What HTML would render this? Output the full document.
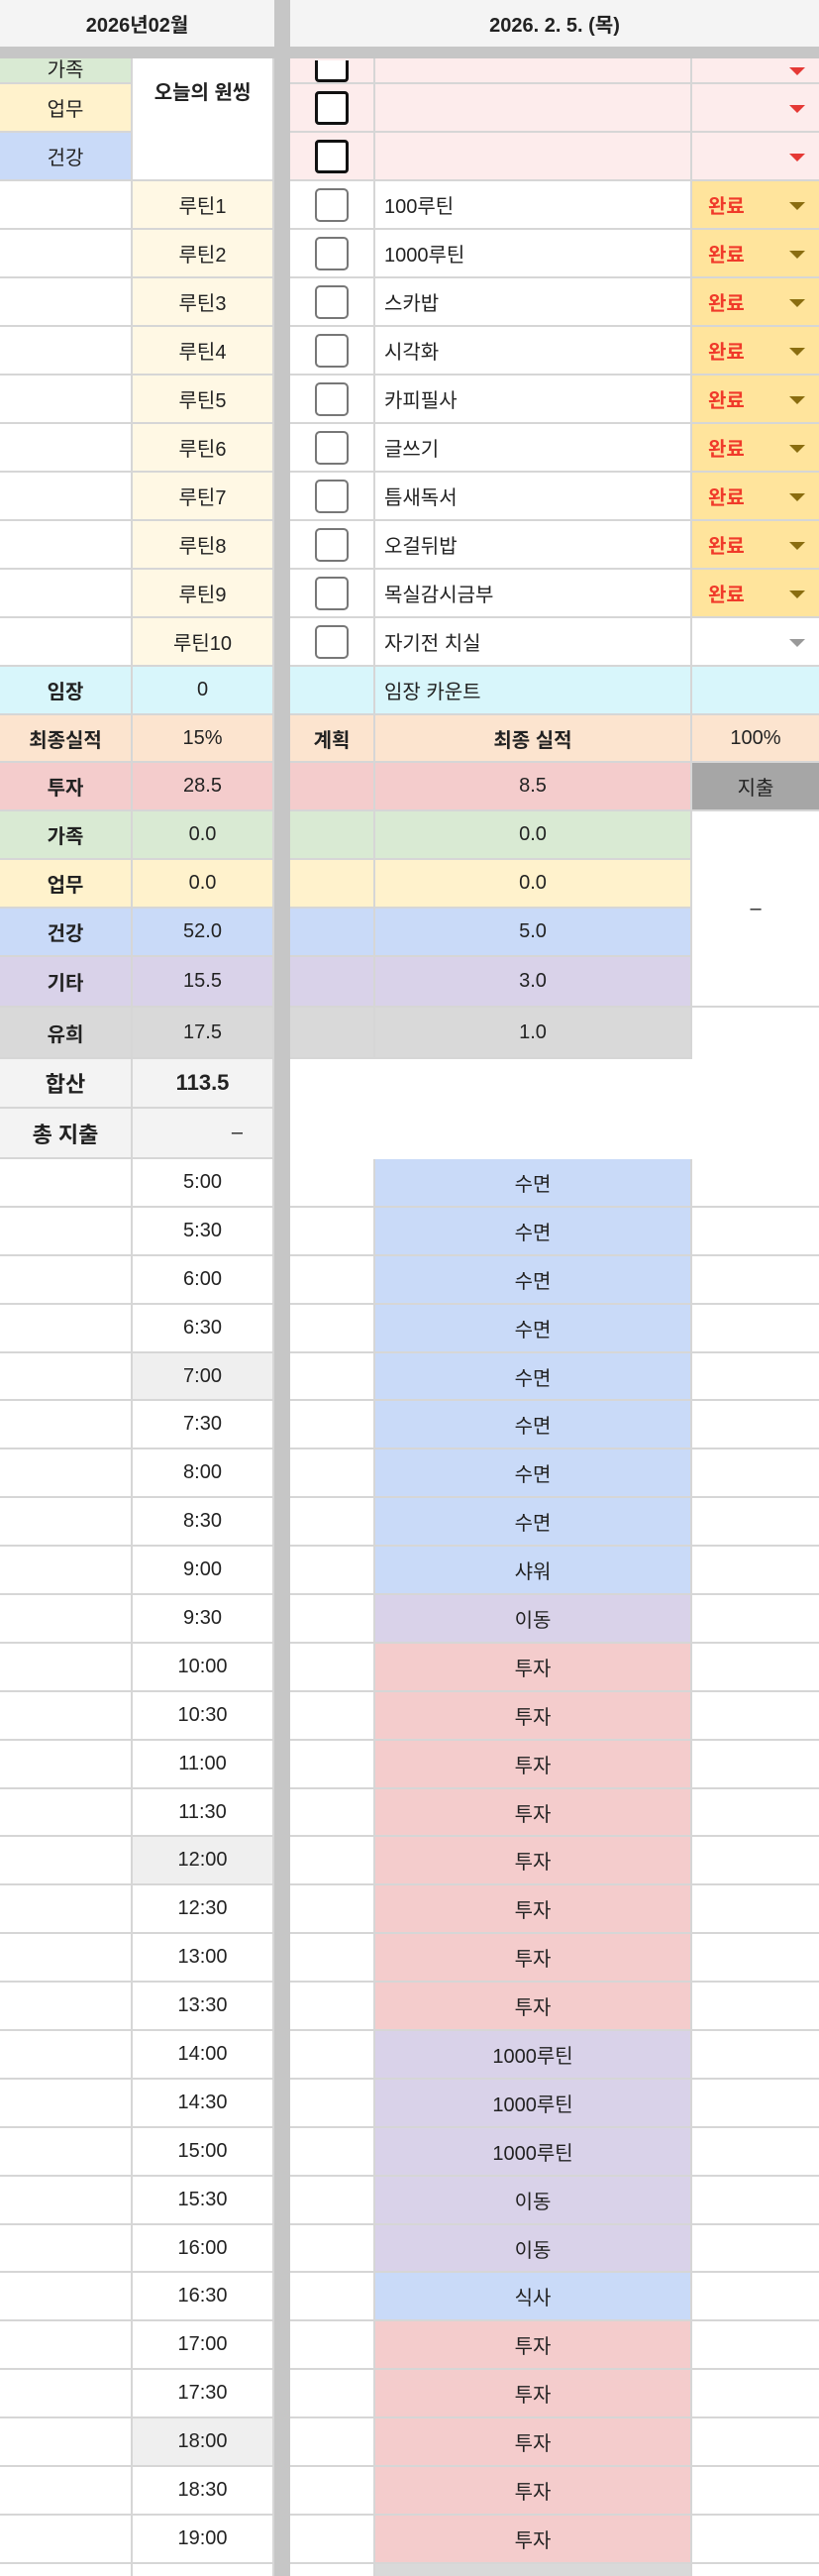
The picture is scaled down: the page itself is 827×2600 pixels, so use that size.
<!DOCTYPE html>
<html><head><meta charset="utf-8">
<style>
*{box-sizing:border-box;margin:0;padding:0}
html,body{width:827px;height:2600px;overflow:hidden;background:#fff}
body{font-family:"Liberation Sans","Noto Sans CJK KR",sans-serif;font-size:20px;color:#222}
#w{position:absolute;left:0;top:0;width:827px;height:2600px;overflow:hidden}
.r{display:flex;height:49px;position:relative}
.t{height:48.9px}
.r>div{border-right:2px solid #d6d6d6;border-bottom:2px solid #d6d6d6;display:flex;align-items:center;justify-content:center;overflow:hidden;white-space:nowrap}
.a{width:134px}.b{width:143px}.v{width:16px;background:#c6c6c6;border:none!important}
.c{width:86px}.d{width:320px}.e{width:128px;border-right:none!important}
.d.l{justify-content:flex-start;padding-left:9px}
.bo{font-weight:bold}
.cb{width:34px;height:34px;border:3px solid #111;border-radius:4px;background:#fff}
.cg{width:34px;height:34px;border:2px solid #777;border-radius:5px;background:#fff}
.e.dd{justify-content:flex-start;position:relative}
.tri{position:absolute;right:14px;top:50%;margin-top:-3px;width:0;height:0;border-left:8px solid transparent;border-right:8px solid transparent;border-top:8px solid #e53935}
.tri.o{border-top-color:#8a6d10}.tri.g{border-top-color:#999}
.done{color:#f03a2a;font-weight:bold;padding-left:16px}
.pk{background:#fdecec}.cr{background:#fff8e4}.or{background:#ffe49c}
.cy{background:#d8f6fb}.pe{background:#fce4cf}.iv{background:#f4cccc}.gr{background:#d9ead3}
.ye{background:#fff2cc}.bl{background:#c9daf8}.pu{background:#d9d2e9}.gy{background:#d9d9d9}
.lg{background:#f3f3f3}.sg{background:#efefef}.dk{background:#a6a6a6}
.nb{border:none!important}
</style></head><body><div id="w">
<div class="r" style="height:47px;background:#f4f4f4">
<div style="width:277px;font-weight:bold;border-bottom:none;border-right:none">2026년02월</div>
<div class="v"></div>
<div style="width:534px;font-weight:bold;border:none">2026. 2. 5. (목)</div>
</div>
<div style="height:12px;background:#c6c6c6"></div>
<div style="position:relative">
<div class="r" style="height:26px"><div class="a gr" style="align-items:flex-end">가족</div><div class="b" style="border-bottom:none"></div><div class="v"></div><div class="c pk" style="align-items:flex-end"><div class="cb" style="height:22px;border-top:none;border-radius:0 0 4px 4px"></div></div><div class="d pk"></div><div class="e pk dd"><span class="tri"></span></div></div>
<div class="r"><div class="a ye">업무</div><div class="b" style="border-bottom:none"></div><div class="v"></div><div class="c pk"><div class="cb"></div></div><div class="d pk"></div><div class="e pk dd"><span class="tri"></span></div></div>
<div class="r"><div class="a bl">건강</div><div class="b"></div><div class="v"></div><div class="c pk"><div class="cb"></div></div><div class="d pk"></div><div class="e pk dd"><span class="tri"></span></div></div>
<div style="position:absolute;left:134px;top:0;width:141px;height:100px;display:flex;justify-content:center;padding-top:18px;font-weight:bold;background:#fff">오늘의 원씽</div>
</div>
<div class="r"><div class="a"></div><div class="b cr">루틴1</div><div class="v"></div><div class="c"><div class="cg"></div></div><div class="d l">100루틴</div><div class="e or dd"><span class="done">완료</span><span class="tri o"></span></div></div>
<div class="r"><div class="a"></div><div class="b cr">루틴2</div><div class="v"></div><div class="c"><div class="cg"></div></div><div class="d l">1000루틴</div><div class="e or dd"><span class="done">완료</span><span class="tri o"></span></div></div>
<div class="r"><div class="a"></div><div class="b cr">루틴3</div><div class="v"></div><div class="c"><div class="cg"></div></div><div class="d l">스카밥</div><div class="e or dd"><span class="done">완료</span><span class="tri o"></span></div></div>
<div class="r"><div class="a"></div><div class="b cr">루틴4</div><div class="v"></div><div class="c"><div class="cg"></div></div><div class="d l">시각화</div><div class="e or dd"><span class="done">완료</span><span class="tri o"></span></div></div>
<div class="r"><div class="a"></div><div class="b cr">루틴5</div><div class="v"></div><div class="c"><div class="cg"></div></div><div class="d l">카피필사</div><div class="e or dd"><span class="done">완료</span><span class="tri o"></span></div></div>
<div class="r"><div class="a"></div><div class="b cr">루틴6</div><div class="v"></div><div class="c"><div class="cg"></div></div><div class="d l">글쓰기</div><div class="e or dd"><span class="done">완료</span><span class="tri o"></span></div></div>
<div class="r"><div class="a"></div><div class="b cr">루틴7</div><div class="v"></div><div class="c"><div class="cg"></div></div><div class="d l">틈새독서</div><div class="e or dd"><span class="done">완료</span><span class="tri o"></span></div></div>
<div class="r"><div class="a"></div><div class="b cr">루틴8</div><div class="v"></div><div class="c"><div class="cg"></div></div><div class="d l">오걸뒤밥</div><div class="e or dd"><span class="done">완료</span><span class="tri o"></span></div></div>
<div class="r"><div class="a"></div><div class="b cr">루틴9</div><div class="v"></div><div class="c"><div class="cg"></div></div><div class="d l">목실감시금부</div><div class="e or dd"><span class="done">완료</span><span class="tri o"></span></div></div>
<div class="r"><div class="a"></div><div class="b cr">루틴10</div><div class="v"></div><div class="c"><div class="cg"></div></div><div class="d l">자기전 치실</div><div class="e dd"><span class="tri g"></span></div></div>
<div class="r" style="height:49px"><div class="a cy bo">임장</div><div class="b cy">0</div><div class="v"></div><div class="c cy"></div><div class="d l cy">임장 카운트</div><div class="e cy"></div></div>
<div class="r" style="height:48px"><div class="a pe bo">최종실적</div><div class="b pe">15%</div><div class="v"></div><div class="c pe bo">계획</div><div class="d pe bo">최종 실적</div><div class="e pe">100%</div></div>
<div class="r"><div class="a iv bo">투자</div><div class="b iv">28.5</div><div class="v"></div><div class="c iv"></div><div class="d iv">8.5</div><div class="e dk">지출</div></div>
<div style="position:relative">
<div class="r"><div class="a gr bo">가족</div><div class="b gr">0.0</div><div class="v"></div><div class="c gr"></div><div class="d gr">0.0</div><div class="e nb"></div></div>
<div class="r"><div class="a ye bo">업무</div><div class="b ye">0.0</div><div class="v"></div><div class="c ye"></div><div class="d ye">0.0</div><div class="e nb"></div></div>
<div class="r"><div class="a bl bo">건강</div><div class="b bl">52.0</div><div class="v"></div><div class="c bl"></div><div class="d bl">5.0</div><div class="e nb"></div></div>
<div class="r" style="height:51px"><div class="a pu bo">기타</div><div class="b pu">15.5</div><div class="v"></div><div class="c pu"></div><div class="d pu">3.0</div><div class="e" style="border-right:none"></div></div>
<div style="position:absolute;left:699px;top:0;width:128px;height:196px;display:flex;align-items:center;justify-content:center">–</div>
</div>
<div class="r" style="height:52px"><div class="a gy bo">유희</div><div class="b gy">17.5</div><div class="v"></div><div class="c gy"></div><div class="d gy">1.0</div><div class="e nb"></div></div>
<div class="r" style="height:50px"><div class="a lg bo" style="font-size:22px">합산</div><div class="b lg bo" style="font-size:22px">113.5</div><div class="v"></div><div class="nb" style="width:534px"></div></div>
<div class="r" style="height:51px"><div class="a lg bo" style="font-size:22px">총 지출</div><div class="b lg" style="justify-content:flex-end;padding-right:30px">–</div><div class="v"></div><div class="nb" style="width:534px"></div></div>
<div class="r t"><div class="a"></div><div class="b">5:00</div><div class="v"></div><div class="c"></div><div class="d bl">수면</div><div class="e"></div></div>
<div class="r t"><div class="a"></div><div class="b">5:30</div><div class="v"></div><div class="c"></div><div class="d bl">수면</div><div class="e"></div></div>
<div class="r t"><div class="a"></div><div class="b">6:00</div><div class="v"></div><div class="c"></div><div class="d bl">수면</div><div class="e"></div></div>
<div class="r t"><div class="a"></div><div class="b">6:30</div><div class="v"></div><div class="c"></div><div class="d bl">수면</div><div class="e"></div></div>
<div class="r t"><div class="a"></div><div class="b sg">7:00</div><div class="v"></div><div class="c"></div><div class="d bl">수면</div><div class="e"></div></div>
<div class="r t"><div class="a"></div><div class="b">7:30</div><div class="v"></div><div class="c"></div><div class="d bl">수면</div><div class="e"></div></div>
<div class="r t"><div class="a"></div><div class="b">8:00</div><div class="v"></div><div class="c"></div><div class="d bl">수면</div><div class="e"></div></div>
<div class="r t"><div class="a"></div><div class="b">8:30</div><div class="v"></div><div class="c"></div><div class="d bl">수면</div><div class="e"></div></div>
<div class="r t"><div class="a"></div><div class="b">9:00</div><div class="v"></div><div class="c"></div><div class="d bl">샤워</div><div class="e"></div></div>
<div class="r t"><div class="a"></div><div class="b">9:30</div><div class="v"></div><div class="c"></div><div class="d pu">이동</div><div class="e"></div></div>
<div class="r t"><div class="a"></div><div class="b">10:00</div><div class="v"></div><div class="c"></div><div class="d iv">투자</div><div class="e"></div></div>
<div class="r t"><div class="a"></div><div class="b">10:30</div><div class="v"></div><div class="c"></div><div class="d iv">투자</div><div class="e"></div></div>
<div class="r t"><div class="a"></div><div class="b">11:00</div><div class="v"></div><div class="c"></div><div class="d iv">투자</div><div class="e"></div></div>
<div class="r t"><div class="a"></div><div class="b">11:30</div><div class="v"></div><div class="c"></div><div class="d iv">투자</div><div class="e"></div></div>
<div class="r t"><div class="a"></div><div class="b sg">12:00</div><div class="v"></div><div class="c"></div><div class="d iv">투자</div><div class="e"></div></div>
<div class="r t"><div class="a"></div><div class="b">12:30</div><div class="v"></div><div class="c"></div><div class="d iv">투자</div><div class="e"></div></div>
<div class="r t"><div class="a"></div><div class="b">13:00</div><div class="v"></div><div class="c"></div><div class="d iv">투자</div><div class="e"></div></div>
<div class="r t"><div class="a"></div><div class="b">13:30</div><div class="v"></div><div class="c"></div><div class="d iv">투자</div><div class="e"></div></div>
<div class="r t"><div class="a"></div><div class="b">14:00</div><div class="v"></div><div class="c"></div><div class="d pu">1000루틴</div><div class="e"></div></div>
<div class="r t"><div class="a"></div><div class="b">14:30</div><div class="v"></div><div class="c"></div><div class="d pu">1000루틴</div><div class="e"></div></div>
<div class="r t"><div class="a"></div><div class="b">15:00</div><div class="v"></div><div class="c"></div><div class="d pu">1000루틴</div><div class="e"></div></div>
<div class="r t"><div class="a"></div><div class="b">15:30</div><div class="v"></div><div class="c"></div><div class="d pu">이동</div><div class="e"></div></div>
<div class="r t"><div class="a"></div><div class="b">16:00</div><div class="v"></div><div class="c"></div><div class="d pu">이동</div><div class="e"></div></div>
<div class="r t"><div class="a"></div><div class="b">16:30</div><div class="v"></div><div class="c"></div><div class="d bl">식사</div><div class="e"></div></div>
<div class="r t"><div class="a"></div><div class="b">17:00</div><div class="v"></div><div class="c"></div><div class="d iv">투자</div><div class="e"></div></div>
<div class="r t"><div class="a"></div><div class="b">17:30</div><div class="v"></div><div class="c"></div><div class="d iv">투자</div><div class="e"></div></div>
<div class="r t"><div class="a"></div><div class="b sg">18:00</div><div class="v"></div><div class="c"></div><div class="d iv">투자</div><div class="e"></div></div>
<div class="r t"><div class="a"></div><div class="b">18:30</div><div class="v"></div><div class="c"></div><div class="d iv">투자</div><div class="e"></div></div>
<div class="r t"><div class="a"></div><div class="b">19:00</div><div class="v"></div><div class="c"></div><div class="d iv">투자</div><div class="e"></div></div>
<div class="r t"><div class="a"></div><div class="b">19:30</div><div class="v"></div><div class="c"></div><div class="d gy">유희</div><div class="e"></div></div>
</div></body></html>
